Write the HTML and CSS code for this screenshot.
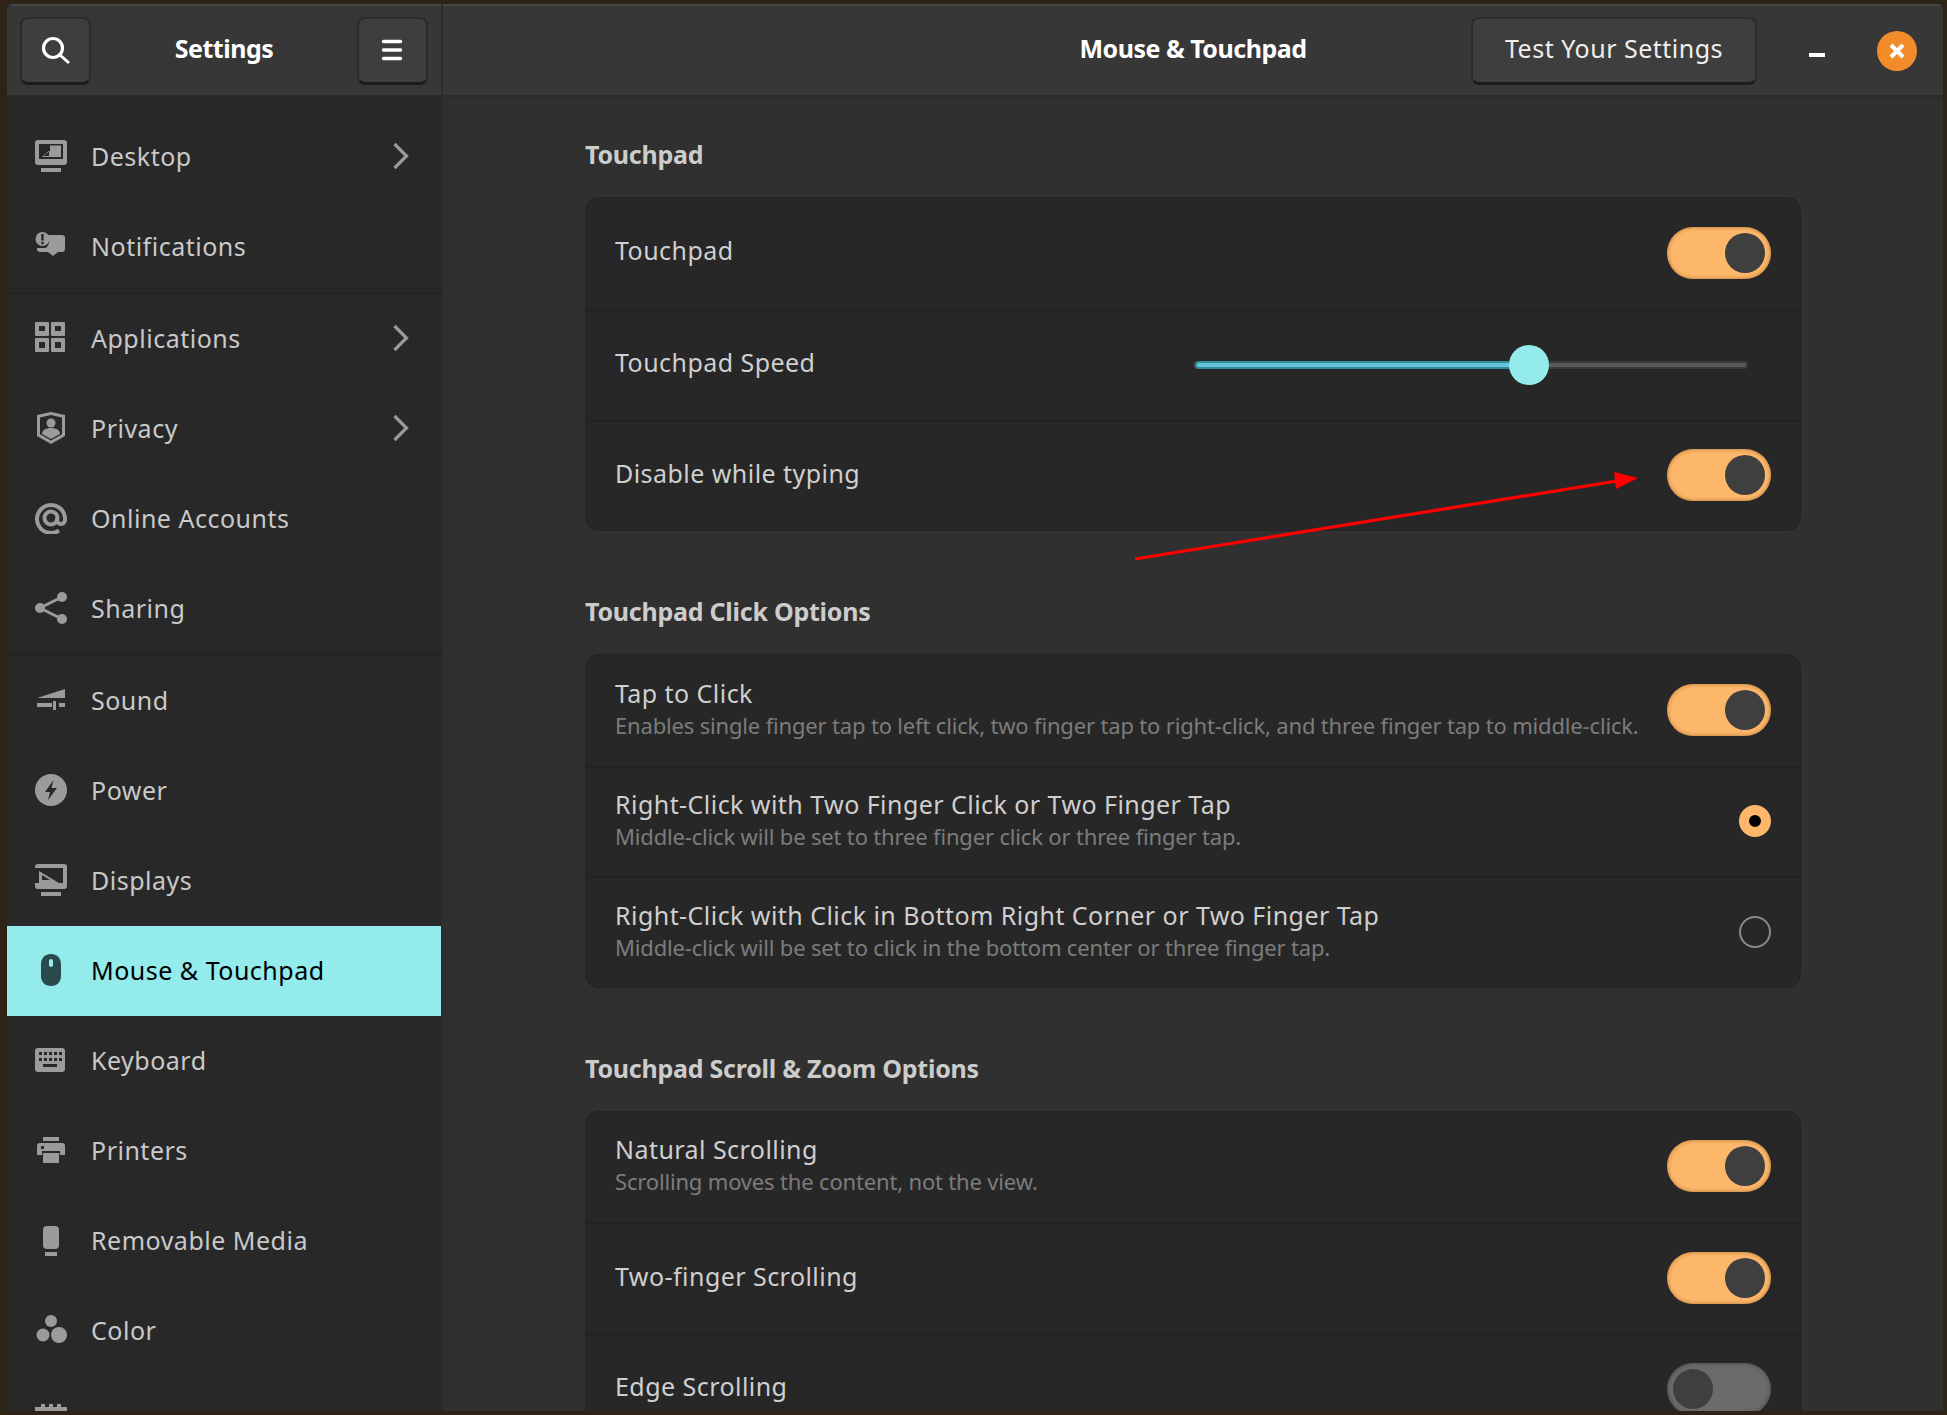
FILE: index.html
```html
<!DOCTYPE html>
<html>
<head>
  <meta charset="UTF-8">
  <meta name="viewport" content="width=device-width, initial-scale=1.0">
  <title>Mouse &amp; Touchpad</title>
  <link rel="stylesheet" href="styles.css">
</head>
<body>
  <div class="window">
    <!-- sidebar -->
    <aside class="side">
      <header class="bar side-bar">
        <button class="btn btn-icon">
          <svg width="32" height="32" viewBox="0 0 32 32"><circle cx="13" cy="14" r="9.500" fill="none" stroke="#fff" stroke-width="3.200"/><path d="M20 21l9 8" stroke="#fff" stroke-width="3" fill="none"/></svg>
        </button>
        <h2 class="bar-title">Settings</h2>
        <button class="btn btn-icon">
          <svg width="22" height="22" viewBox="0 0 22 22"><path d="M2.500 2.500h17M2.500 11h17M2.500 19.500h17" stroke="#fff" stroke-width="3.400" stroke-linecap="round"/></svg>
        </button>
      </header>
      <nav class="nav">
        <a class="nav-item">
          <svg class="ico" viewBox="0 0 32 32"><path d="M3 0h26a3 3 0 0 1 3 3v19a3 3 0 0 1-3 3H3a3 3 0 0 1-3-3V3a3 3 0 0 1 3-3zM6 28h20v4H6z"/><path d="M4 4h24v15H4z" fill="#282828"/><path d="M15 5.500h11V17H6.500L15 10z"/><path d="M14 6h1v5l-8 6H6v-1h8z" fill="#282828"/></svg>
          <span>Desktop</span>
          <svg class="chev" viewBox="0 0 18 28"><path d="M2.500 2l12 12-12 12"/></svg>
        </a>
        <a class="nav-item nav-end">
          <svg class="ico" viewBox="0 0 32 32"><path d="M9 5h18a3 3 0 0 1 3 3v11a3 3 0 0 1-3 3h-4l-5 4-5-4H5a3 3 0 0 1-3-3v-1h9a9 9 0 0 0 1-13z"/><circle cx="7.500" cy="9" r="7"/><path d="M6.300 4h2.400v6.500H6.300zM6.300 11.800h2.400v2.400H6.300z" fill="#282828"/></svg>
          <span>Notifications</span>
        </a>
        <a class="nav-item">
          <svg class="ico" viewBox="0 0 32 32"><path fill-rule="evenodd" d="M1 0h12a1 1 0 0 1 1 1v12a1 1 0 0 1-1 1H1a1 1 0 0 1-1-1V1a1 1 0 0 1 1-1zM4 4v5h6V4zM17 0h12a1 1 0 0 1 1 1v12a1 1 0 0 1-1 1H17a1 1 0 0 1-1-1V1a1 1 0 0 1 1-1zM20 4v5h6V4zM1 16h12a1 1 0 0 1 1 1v12a1 1 0 0 1-1 1H1a1 1 0 0 1-1-1V17a1 1 0 0 1 1-1zM4 20v6h6v-6zM17 16h12a1 1 0 0 1 1 1v12a1 1 0 0 1-1 1H17a1 1 0 0 1-1-1V17a1 1 0 0 1 1-1zM20 20v6h6v-6z"/></svg>
          <span>Applications</span>
          <svg class="chev" viewBox="0 0 18 28"><path d="M2.500 2l12 12-12 12"/></svg>
        </a>
        <a class="nav-item">
          <svg class="ico" viewBox="0 0 32 32"><path fill-rule="evenodd" d="M2 3l14-3 14 3v21l-14 8-14-8zM5 5.500v16.700l11 6.300 11-6.300V5.500L16 3z"/><circle cx="16" cy="11" r="4.500"/><path d="M7 22c0-4 4-6 9-6s9 2 9 6l-9 5z"/></svg>
          <span>Privacy</span>
          <svg class="chev" viewBox="0 0 18 28"><path d="M2.500 2l12 12-12 12"/></svg>
        </a>
        <a class="nav-item">
          <svg class="ico" viewBox="0 0 32 32"><path d="M24 28.500A14 14 0 1 1 30 16v2a4 4 0 0 1-8 0v-2" fill="none" stroke="#9b9b9b" stroke-width="4"/><circle cx="16" cy="16" r="6.500" fill="none" stroke="#9b9b9b" stroke-width="4"/></svg>
          <span>Online Accounts</span>
        </a>
        <a class="nav-item nav-end">
          <svg class="ico" viewBox="0 0 32 32"><circle cx="27" cy="5" r="5"/><circle cx="27" cy="27" r="5"/><circle cx="5" cy="16" r="5"/><path d="M27 5L5 16l22 11" fill="none" stroke="#9b9b9b" stroke-width="3"/></svg>
          <span>Sharing</span>
        </a>
        <a class="nav-item">
          <svg class="ico" viewBox="0 0 32 32"><path d="M2 14L30 5v9zM2 19h15v4H2zM18 17h3v9h-3zM24 19h6v4h-6z"/></svg>
          <span>Sound</span>
        </a>
        <a class="nav-item">
          <svg class="ico" viewBox="0 0 32 32"><circle cx="16" cy="16" r="16"/><path d="M18.500 6L10 18h5l-2 8 9-12h-5.500z" fill="#282828"/></svg>
          <span>Power</span>
        </a>
        <a class="nav-item">
          <svg class="ico" viewBox="0 0 32 32"><path d="M3 0h26a3 3 0 0 1 3 3v19a3 3 0 0 1-3 3H3a3 3 0 0 1-3-3v-3h28V4H0V3a3 3 0 0 1 3-3zM6 28h20v4H6z"/><path fill-rule="evenodd" d="M4 7l20 12H4zM7 11v5h8z"/></svg>
          <span>Displays</span>
        </a>
        <a class="nav-item nav-on">
          <svg class="ico" viewBox="0 0 32 32"><path fill-rule="evenodd" d="M16 0c6 0 10 4 10 10v12c0 6-4 10-10 10S6 28 6 22V10C6 4 10 0 16 0zM16 5c-1.200 0-2 .8-2 2v4c0 1.200.8 2 2 2s2-.8 2-2V7c0-1.200-.8-2-2-2z"/></svg>
          <span>Mouse &amp; Touchpad</span>
        </a>
        <a class="nav-item">
          <svg class="ico" viewBox="0 0 32 32"><path fill-rule="evenodd" d="M3 4h24a3 3 0 0 1 3 3v18a3 3 0 0 1-3 3H3a3 3 0 0 1-3-3V7a3 3 0 0 1 3-3zM4 8v3h3V8zM9 8v3h3V8zM14 8v3h3V8zM19 8v3h3V8zM24 8v3h3V8zM4 14v3h3v-3zM9 14v3h3v-3zM14 14v3h3v-3zM19 14v3h3v-3zM24 14v3h3v-3zM8 20v3h14v-3z"/></svg>
          <span>Keyboard</span>
        </a>
        <a class="nav-item">
          <svg class="ico" viewBox="0 0 32 32"><path fill-rule="evenodd" d="M8 3h16v4H8zM5 9h22a3 3 0 0 1 3 3v9h-5v-4H7v4H2v-9a3 3 0 0 1 3-3zM6 12v3h3v-3z"/><path d="M8 19h16v10H8z"/></svg>
          <span>Printers</span>
        </a>
        <a class="nav-item">
          <svg class="ico" viewBox="0 0 32 32"><path d="M12 2h8a4 4 0 0 1 4 4v15a4 4 0 0 1-4 4h-8a4 4 0 0 1-4-4V6a4 4 0 0 1 4-4zM10 28h12v4H10z"/></svg>
          <span>Removable Media</span>
        </a>
        <a class="nav-item">
          <svg class="ico" viewBox="0 0 32 32"><circle cx="16" cy="7" r="6"/><circle cx="8" cy="21" r="6.500"/><circle cx="24" cy="21" r="8"/></svg>
          <span>Color</span>
        </a>
        <a class="nav-item">
          <svg class="ico" viewBox="0 0 32 32"><path d="M6 0h4v3H6zM14 0h4v3h-4zM22 0h4v3h-4zM0 3h32v26H0z"/></svg>
          <span>Firmware</span>
        </a>
      </nav>
    </aside>

    <!-- main panel -->
    <main class="main">
      <header class="bar main-bar">
        <div></div>
        <h2 class="bar-title">Mouse &amp; Touchpad</h2>
        <div class="bar-right">
          <button class="btn btn-text">Test Your Settings</button>
          <span class="win-min"></span>
          <span class="win-close">
            <svg width="18" height="18" viewBox="0 0 18 18"><path d="M3 3l12 12M15 3L3 15" stroke="#fff" stroke-width="4"/></svg>
          </span>
        </div>
      </header>

      <div class="page">
        <section class="group">
          <h3>Touchpad</h3>
          <div class="card">
            <div class="row">
              <div class="row-text solo"><div class="row-title">Touchpad</div></div>
              <span class="switch on"></span>
            </div>
            <div class="row">
              <div class="row-text solo"><div class="row-title">Touchpad Speed</div></div>
              <div class="slider">
                <div class="slider-fill" style="width: 60.6%"></div>
                <span class="slider-knob"></span>
              </div>
            </div>
            <div class="row">
              <div class="row-text solo"><div class="row-title">Disable while typing</div></div>
              <span class="switch on"></span>
            </div>
          </div>
        </section>

        <section class="group">
          <h3>Touchpad Click Options</h3>
          <div class="card">
            <div class="row">
              <div class="row-text">
                <div class="row-title">Tap to Click</div>
                <div class="row-desc">Enables single finger tap to left click, two finger tap to right-click, and three finger tap to middle-click.</div>
              </div>
              <span class="switch on"></span>
            </div>
            <div class="row">
              <div class="row-text">
                <div class="row-title">Right-Click with Two Finger Click or Two Finger Tap</div>
                <div class="row-desc">Middle-click will be set to three finger click or three finger tap.</div>
              </div>
              <span class="radio on"></span>
            </div>
            <div class="row">
              <div class="row-text">
                <div class="row-title">Right-Click with Click in Bottom Right Corner or Two Finger Tap</div>
                <div class="row-desc">Middle-click will be set to click in the bottom center or three finger tap.</div>
              </div>
              <span class="radio"></span>
            </div>
          </div>
        </section>

        <section class="group">
          <h3>Touchpad Scroll &amp; Zoom Options</h3>
          <div class="card">
            <div class="row">
              <div class="row-text">
                <div class="row-title">Natural Scrolling</div>
                <div class="row-desc">Scrolling moves the content, not the view.</div>
              </div>
              <span class="switch on"></span>
            </div>
            <div class="row">
              <div class="row-text solo"><div class="row-title">Two-finger Scrolling</div></div>
              <span class="switch on"></span>
            </div>
            <div class="row">
              <div class="row-text solo"><div class="row-title">Edge Scrolling</div></div>
              <span class="switch"></span>
            </div>
          </div>
        </section>
      </div>
    </main>

    <!-- red annotation arrow -->
    <svg class="arrow" width="520" height="100" viewBox="0 0 520 100">
      <path d="M2 96L484 18" stroke="#f00" stroke-width="3.200" fill="none"/>
      <path d="M505 15L481 9l2 17z" fill="#f00"/>
    </svg>
  </div>
</body>
</html>
```

FILE: styles.css
```css
* {
  box-sizing: border-box;
}
html, body {
  height: 100%;
}
body {
  margin: 0;
  padding: 4px 4px 4px 7px;
  background-color: #2f2216;
  font-family: "Noto Sans", sans-serif;
  overflow: hidden;
}
.window {
  position: relative;
  display: flex;
  height: 100%;
  overflow: hidden;
  border-radius: 6px 6px 0 0;
  background-color: #303030;
}

/* header bars */
.bar {
  height: 93px;
  flex-shrink: 0;
  background-color: #373737;
  border-top: 2px solid #474747;
  border-bottom: 2px solid #2a2a2a;
}
.side-bar {
  display: flex;
  align-items: center;
  justify-content: space-between;
  padding: 0 13px;
}
.main-bar {
  display: grid;
  grid-template-columns: 1fr auto 1fr;
  align-items: center;
}
.bar-title {
  margin: 0 0 6px;
  color: #fff;
  font-size: 25px;
  font-weight: 700;
  letter-spacing: -0.5px;
}
.bar-right {
  display: flex;
  align-items: center;
  justify-content: flex-end;
}
.btn {
  display: flex;
  align-items: center;
  justify-content: center;
  height: 68px;
  padding: 0;
  background-color: #3e3e3e;
  border: 2px solid #2b2b2b;
  border-bottom: 3px solid #1c1c1c;
  border-radius: 8px;
  color: #eee;
  font-family: inherit;
  font-size: 25px;
}
.btn-icon {
  width: 71px;
}
.btn-text {
  width: 286px;
  padding-bottom: 4px;
  letter-spacing: 0.5px;
}
.win-min {
  width: 16px;
  height: 4px;
  margin: 8px 0 0 52px;
  background-color: #fff;
}
.win-close {
  display: flex;
  align-items: center;
  justify-content: center;
  width: 40px;
  height: 40px;
  margin: 0 26px 0 52px;
  border-radius: 50%;
  background-color: #f28c2b;
}

/* sidebar */
.side {
  display: flex;
  flex-direction: column;
  width: 436px;
  flex-shrink: 0;
  background-color: #282828;
  border-right: 2px solid #2c2c2c;
}
.nav {
  padding-top: 15px;
}
.nav-item {
  display: flex;
  align-items: center;
  gap: 24px;
  height: 90px;
  padding: 0 31px 2px 28px;
  color: #c9c9c9;
  font-size: 25px;
  letter-spacing: 0.5px;
}
.nav-end {
  height: 92px;
  border-bottom: 2px solid #242424;
}
.nav-on {
  background-color: #94ebeb;
  color: #000;
}
.nav-on .ico {
  fill: #2a4a4d;
}
.ico {
  width: 32px;
  height: 32px;
  flex-shrink: 0;
  fill: #9b9b9b;
}
.chev {
  width: 18px;
  height: 28px;
  margin-left: auto;
  fill: none;
  stroke: #9b9b9b;
  stroke-width: 3.2;
}

/* main panel */
.main {
  flex: 1;
  min-width: 0;
  display: flex;
  flex-direction: column;
}
.page {
  width: 1216px;
  margin: 0 auto;
  padding-top: 40px;
}
.group {
  margin-bottom: 62.5px;
}
.group h3 {
  margin: 0 0 26px;
  color: #ccc;
  font-size: 25px;
  font-weight: 700;
  line-height: 34px;
  letter-spacing: -0.25px;
}
.card {
  background-color: #272727;
  border: 1px solid #222;
  border-radius: 14px;
}
.row {
  display: flex;
  align-items: center;
  height: 110.75px;
  padding: 0 29px 1px;
}
.row + .row {
  border-top: 2px solid #222;
}
.row-text {
  flex: 1;
  min-width: 0;
  margin-bottom: 2px;
}
.row-text.solo {
  margin-bottom: 5px;
}
.row-title {
  color: #cfcfcf;
  font-size: 25px;
  line-height: 32px;
  letter-spacing: 0.45px;
}
.row-desc {
  color: #7c7c7c;
  font-size: 22px;
  line-height: 32px;
  letter-spacing: -0.17px;
  white-space: nowrap;
}

/* switch, radio, slider */
.switch {
  display: block;
  width: 104px;
  height: 52px;
  padding: 6px;
  flex-shrink: 0;
  border-radius: 26px;
  background-color: #6b6b6b;
  box-shadow: inset 0 0 5px rgba(0, 0, 0, 0.35);
}
.switch::before {
  content: "";
  display: block;
  width: 40px;
  height: 40px;
  border-radius: 50%;
  background-color: #3f3f3f;
}
.switch.on {
  background-color: #fdb76a;
  box-shadow: inset 0 0 4px rgba(120, 70, 10, 0.6);
}
.switch.on::before {
  margin-left: 52px;
}
.radio {
  display: block;
  width: 32px;
  height: 32px;
  flex-shrink: 0;
  border: 2px solid #8a8a8a;
  border-radius: 50%;
}
.radio.on {
  border: 10px solid #fdb76a;
  background-color: #000;
}
.slider {
  display: flex;
  align-items: center;
  width: 555px;
  height: 8px;
  margin-right: 23px;
  background-color: #5a5a5a;
  border: 2px solid #3a3a3a;
  border-radius: 4px;
}
.slider-fill {
  height: 8px;
  background-color: #63c5da;
  border: 2px solid #2f8a9a;
  border-radius: 4px 0 0 4px;
  flex-shrink: 0;
}
.slider-knob {
  width: 40px;
  height: 40px;
  margin-left: -20px;
  flex-shrink: 0;
  border-radius: 50%;
  background-color: #94ebeb;
}

/* drawn on top of the screenshot, free position */
.arrow {
  position: absolute;
  left: 1126px;
  top: 459px;
}
```
